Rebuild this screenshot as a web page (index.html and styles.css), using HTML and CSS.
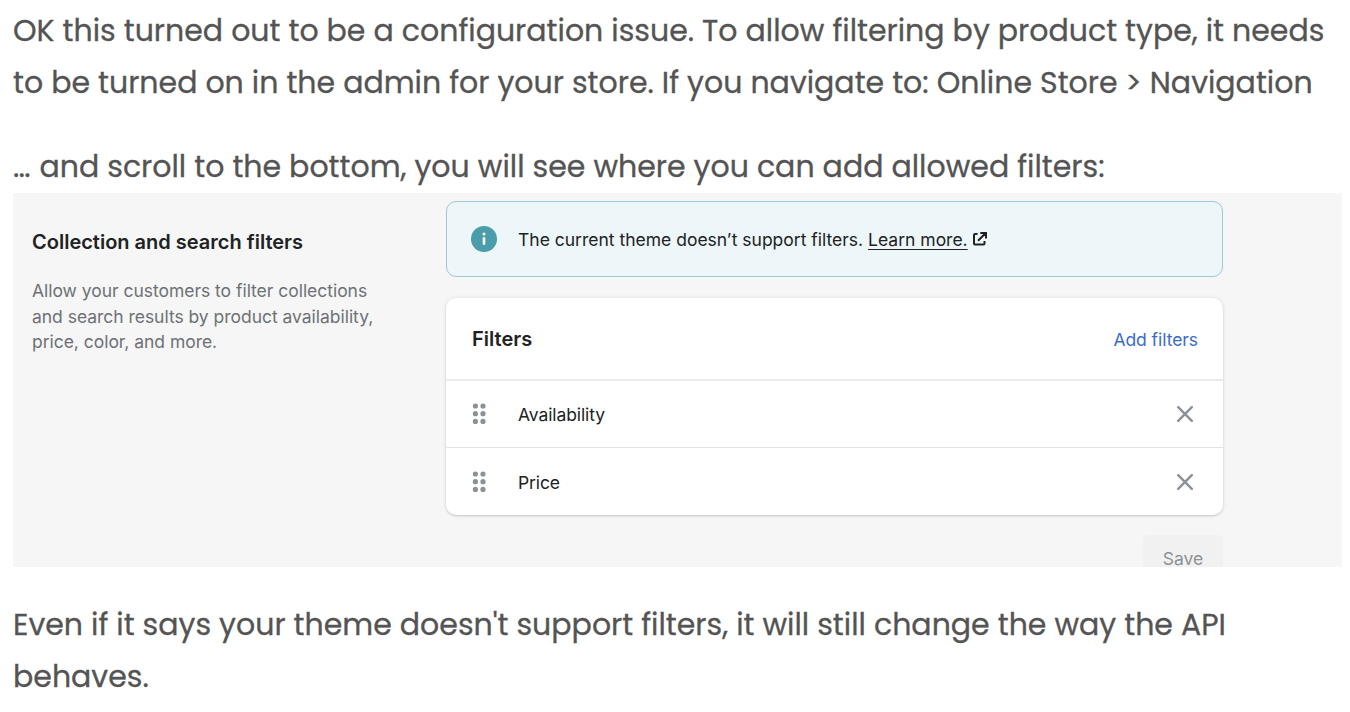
FILE: index.html
```html
<!DOCTYPE html>
<html lang="en">
<head>
<meta charset="utf-8">
<title>Filter configuration</title>
<link rel="stylesheet" href="styles.css">
</head>
<body>
<main class="post">
  <p class="copy"><span class="line">OK this turned out to be a configuration issue. To allow filtering by product type, it needs</span><span class="line">to be turned on in the admin for your store. If you navigate to: Online Store &gt; Navigation</span></p>
  <p class="copy"><span class="line"><span class="ellipsis">…</span> and scroll to the bottom, you will see where you can add allowed filters:</span></p>
  <section class="admin">
    <div class="intro">
      <h2 class="heading">Collection and search filters</h2>
      <p class="hint">Allow your customers to filter collections<br>and search results by product availability,<br>price, color, and more.</p>
    </div>
    <div class="main">
      <div class="banner">
        <svg class="info" viewBox="0 0 26 26" width="26" height="26"><circle cx="13" cy="13" r="13" fill="#4a9da9"/><circle cx="13" cy="8" r="1.5" fill="#fff"/><path d="M13 12.2v5.6" stroke="#fff" stroke-width="2.6" stroke-linecap="round"/></svg>
        <span class="banner-text">The current theme doesn’t support filters. <a class="learn">Learn more.</a></span>
        <svg class="external" viewBox="0 0 14 14" width="14" height="14" fill="none" stroke="#202223" stroke-width="2"><path d="M4.5 2H2Q1 2 1 3V11.5Q1 12.5 2 12.5H10.5Q11.5 12.5 11.5 11.5V9M5 8.8L12 1.8M7.3 1H13V6.6"/></svg>
      </div>
      <div class="card">
        <div class="card-head"><h2 class="heading">Filters</h2><a class="add">Add filters</a></div>
        <div class="row">
          <svg class="grip" viewBox="0 0 14 22" width="14" height="22" fill="#8c9196"><circle cx="3.4" cy="3" r="2.6"/><circle cx="11" cy="3" r="2.6"/><circle cx="3.4" cy="10.7" r="2.6"/><circle cx="11" cy="10.7" r="2.6"/><circle cx="3.4" cy="18.4" r="2.6"/><circle cx="11" cy="18.4" r="2.6"/></svg>
          <span class="name">Availability</span>
          <svg class="close" viewBox="0 0 16 16" width="16" height="16"><path d="M1.2 1.2L14.8 14.8M14.8 1.2L1.2 14.8" stroke="#8c9196" stroke-width="2.4" stroke-linecap="round"/></svg>
        </div>
        <div class="row">
          <svg class="grip" viewBox="0 0 14 22" width="14" height="22" fill="#8c9196"><circle cx="3.4" cy="3" r="2.6"/><circle cx="11" cy="3" r="2.6"/><circle cx="3.4" cy="10.7" r="2.6"/><circle cx="11" cy="10.7" r="2.6"/><circle cx="3.4" cy="18.4" r="2.6"/><circle cx="11" cy="18.4" r="2.6"/></svg>
          <span class="name">Price</span>
          <svg class="close" viewBox="0 0 16 16" width="16" height="16"><path d="M1.2 1.2L14.8 14.8M14.8 1.2L1.2 14.8" stroke="#8c9196" stroke-width="2.4" stroke-linecap="round"/></svg>
        </div>
      </div>
      <div class="save">Save</div>
    </div>
  </section>
  <p class="copy"><span class="line">Even if it says your theme doesn't support filters, it will still change the way the API</span><span class="line">behaves.</span></p>
</main>
</body>
</html>
```
FILE: styles.css
```css
* { box-sizing: border-box; }
body { margin: 0; background: #fff; overflow: hidden; font-family: Inter, sans-serif; }
.post { padding: 5px 8px 0 13px; }
.copy { margin: 0 0 32px; font-family: Poppins, Inter, sans-serif; font-size: 30px; line-height: 52px; color: #545454; -webkit-text-stroke: 0.3px #545454; }
.line { display: block; width: max-content; white-space: nowrap; }
.ellipsis { letter-spacing: 1px; }
.admin { display: flex; width: 1329px; height: 374px; margin: -32px 0 0; padding-top: 8px; background: #f6f6f6; overflow: hidden; }
.admin + .copy { margin-top: 32px; }
.intro { width: 433px; padding: 27px 0 0 19px; }
.heading { margin: 0; font-size: 20px; line-height: 28px; font-weight: 600; color: #202223; }
.hint { margin: 22px 0 0; font-size: 17.5px; letter-spacing: -0.03px; line-height: 25.5px; color: #6d7175; white-space: nowrap; }
.main { display: flex; flex-direction: column; width: 777px; flex: none; }
.banner { display: flex; align-items: center; flex: none; height: 76px; padding-left: 24px; border: 1px solid #9fc9d1; border-radius: 10px; background: #edf6f9; color: #202223; font-size: 17.5px; white-space: nowrap; }
.info { margin-right: 21px; }
.learn { text-decoration: underline; text-underline-offset: 3px; text-decoration-thickness: 1px; }
.external { margin-left: 5px; }
.card { flex: none; height: 217px; margin-top: 21px; border-radius: 10px; background: #fff; box-shadow: 0 0 5px rgba(23,24,24,.08), 0 1px 2px rgba(0,0,0,.16); }
.card-head { display: flex; justify-content: space-between; align-items: center; height: 81px; padding: 1px 25px 0 26px; }
.add { color: #3a6cc8; font-size: 17.5px; letter-spacing: -0.06px; }
.row { display: flex; align-items: center; height: 68px; padding: 0 30px 0 26px; border-top: 1px solid #e1e3e5; color: #202223; font-size: 17.5px; }
.card-head + .row { border-top: 2px solid #ebebeb; }
.name { margin: 1px auto 0 32px; letter-spacing: -0.1px; }
.save { align-self: flex-end; flex: none; width: 80px; height: 48px; margin-top: 20px; border-radius: 5px; background: #f1f1f1; color: #8c9196; font-size: 17.5px; line-height: 48px; text-align: center; }
```
